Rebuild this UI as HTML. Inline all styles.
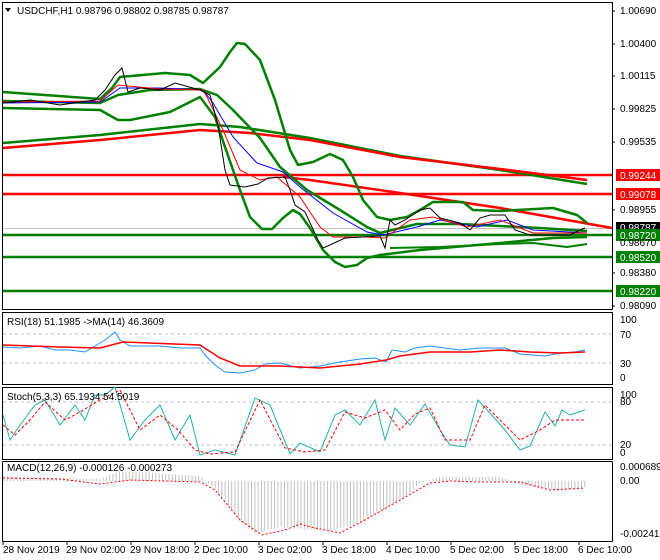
<!DOCTYPE html>
<html><head><meta charset="utf-8"><style>
body{margin:0;background:#fff;}
svg{display:block;font-family:"Liberation Sans",sans-serif;font-size:10px;}
</style></head><body>
<svg id="s" width="660" height="560" xmlns="http://www.w3.org/2000/svg">
<rect x="0" y="0" width="660" height="560" fill="#fff"/>
<g fill="none" stroke="#000" stroke-width="1">
<rect x="2.5" y="2.5" width="610" height="307"/>
<rect x="2.5" y="312.5" width="610" height="72"/>
<rect x="2.5" y="387.5" width="610" height="72"/>
<line x1="2.5" y1="461.5" x2="612.5" y2="461.5"/>
<line x1="2.5" y1="461.5" x2="2.5" y2="541.5"/>
<line x1="612.5" y1="461.5" x2="612.5" y2="541.5"/>
<line x1="2.5" y1="541.5" x2="612.5" y2="541.5"/>
</g>
<line x1="3" y1="228.5" x2="612" y2="228.5" stroke="#c0c0c0"/>
<g stroke-width="2.5">
<line x1="3" y1="175" x2="612" y2="175" stroke="#f00"/>
<line x1="3" y1="194" x2="612" y2="194" stroke="#f00"/>
<line x1="3" y1="235" x2="612" y2="235" stroke="#008000"/>
<line x1="3" y1="257" x2="612" y2="257" stroke="#008000"/>
<line x1="3" y1="291" x2="612" y2="291" stroke="#008000"/>
</g>
<g fill="none" stroke-width="2.5" stroke-linejoin="round">
<polyline stroke="#008000" points="3,143 100,135 200,124 240,127 310,138 400,156 500,170 587,184"/>
<polyline stroke="#f00" points="3,148 100,140 200,130 250,133 310,140 400,157 500,169 587,180"/>
<polyline stroke="#f00" points="283,177 310,180 400,193 500,208 612,228"/>
<polyline stroke="#008000" points="3,92 100,99 112,88 120,77 165,73 190,75 203,83 220,67 230,52 237,43 245,44 260,60 275,100 290,150 298,165 313,162 330,154 343,160 353,177 363,200 377,217 390,220 407,217 420,210 433,202 463,202 473,210 500,211 553,208 577,215 587,223"/>
<polyline stroke="#008000" points="3,108 100,110 118,120 130,120 170,112 200,97 215,117 225,147 240,190 250,217 262,229 272,229 283,218 293,210 300,214 310,228 323,250 335,262 345,267 357,265 367,258 380,255 420,250 500,243 553,238 587,237"/>
<polyline stroke="#008000" stroke-width="2" points="390,248 440,247 500,244 533,243 567,247 587,244"/>
<polyline stroke="#008000" points="3,101 100,103 118,95 150,90 200,89 217,95 233,110 260,138 280,167 307,190 340,210 367,227 380,233 417,224 460,224 500,226 540,228 587,231"/>
</g>
<g fill="none" stroke-width="1">
<polyline stroke="#00f" points="3,103 100,102 120,88 160,88 203,90 213,103 233,137 257,163 283,172 300,187 333,213 367,232 383,235 417,227 440,220 477,227 507,220 533,230 587,233"/>
<polyline stroke="#f00" points="3,102 100,101 118,85 160,89 203,90 207,97 223,130 240,170 260,180 277,177 300,197 320,227 333,237 367,237 385,238 410,220 433,217 467,227 500,220 533,233 587,233"/>
<polyline stroke="#000" points="3,103 30,100 60,105 95,100 105,90 115,75 122,68 128,92 140,88 160,90 175,83 200,90 210,95 218,125 225,170 230,185 245,187 258,184 268,178 285,177 290,190 295,205 305,212 318,240 323,248 330,245 345,238 380,236 385,248 390,220 395,225 405,220 420,210 430,208 440,218 460,223 470,230 480,218 490,215 505,215 515,230 530,235 570,235 580,230 585,228"/>
</g>
<g stroke="#c0c0c0" stroke-dasharray="3,3"><line x1="3" y1="334" x2="612" y2="334"/><line x1="3" y1="363" x2="612" y2="363"/>
<line x1="3" y1="402" x2="612" y2="402"/><line x1="3" y1="445" x2="612" y2="445"/></g>
<polyline fill="none" stroke="#1e90ff" points="3,347 20,348 40,346 55,350 70,350 85,352 95,346 105,340 115,332 120,340 130,346 160,346 180,348 200,348 205,355 215,365 225,372 240,373 255,370 265,364 280,363 300,368 320,366 340,362 360,359 375,358 386,362 392,350 405,352 415,348 430,346 460,350 480,348 505,348 520,354 545,356 560,353 575,352 585,350"/>
<polyline fill="none" stroke="#f00" stroke-width="1.5" points="3,345 60,347 100,348 123,342 200,345 220,358 240,366 280,366 320,368 360,364 386,360 400,356 430,352 470,352 500,350 530,352 560,353 585,352"/>
<polyline fill="none" stroke="#20b2aa" points="3,415 10,440 20,425 35,405 45,400 60,425 75,405 85,420 95,395 105,395 115,387 130,440 145,420 160,405 175,440 190,415 200,455 215,450 235,455 255,398 270,405 290,454 300,443 320,452 335,415 345,410 360,425 375,400 385,440 395,408 410,425 425,404 440,430 450,445 465,447 478,400 490,413 505,430 520,450 530,446 545,412 555,426 562,410 570,415 585,410"/>
<polyline fill="none" stroke="#f00" stroke-dasharray="3,2" points="3,425 15,435 30,420 45,402 65,420 80,412 100,400 120,390 140,430 160,415 178,430 195,450 210,454 235,452 260,400 285,448 305,452 325,450 345,412 365,418 385,410 400,430 415,414 430,408 445,440 470,440 485,405 500,420 520,440 540,430 555,420 585,420"/>
<g id="h" stroke="#c0c0c0" stroke-width="1"></g>
<polyline fill="none" stroke="#f00" stroke-dasharray="2,2" points="3,478 60,479 100,484 130,480 200,482 215,490 240,520 262,535 285,530 300,524 315,528 340,533 365,520 400,500 430,483 450,481 480,482 520,482 550,490 585,488"/>
<polygon points="5,8 11,8 8,12" fill="#000"/>
<text x="17" y="14">USDCHF,H1  0.98796 0.98802 0.98785 0.98787</text>
<text x="7" y="325">RSI(18) 51.1985  -&gt;MA(14) 46.3609</text>
<text x="7" y="400">Stoch(5,3,3) 65.1934 54.5019</text>
<text x="7" y="471">MACD(12,26,9) -0.000126 -0.000273</text>
<g font-size="10">
<text x="620" y="14">1.00690</text><text x="620" y="47">1.00400</text><text x="620" y="79">1.00115</text><text x="620" y="112">0.99825</text><text x="620" y="145">0.99535</text><text x="620" y="213">0.98955</text><text x="620" y="276">0.98380</text><text x="620" y="309">0.98090</text>
<text x="620" y="323">100</text><text x="620" y="338">70</text><text x="620" y="367">30</text><text x="620" y="381">0</text>
<text x="620" y="398">100</text><text x="620" y="405">80</text><text x="620" y="448">20</text><text x="620" y="456">0</text>
<text x="620" y="470">0.000689</text><text x="620" y="484">0.00</text><text x="620" y="537">-0.002413</text>
</g>
<rect x="616" y="169" width="44" height="12" fill="#f00"/><text x="620" y="179" fill="#fff">0.99244</text>
<rect x="616" y="188" width="44" height="12" fill="#f00"/><text x="620" y="198" fill="#fff">0.99078</text>
<rect x="616" y="222" width="44" height="11" fill="#000"/><text x="620" y="231" fill="#fff">0.98787</text>
<rect x="616" y="229" width="44" height="12" fill="#008000"/><text x="620" y="239" fill="#fff">0.98720</text>
<text x="620" y="246">0.98670</text>
<rect x="616" y="251" width="44" height="12" fill="#008000"/><text x="620" y="261" fill="#fff">0.98520</text>
<rect x="616" y="285" width="44" height="12" fill="#008000"/><text x="620" y="295" fill="#fff">0.98220</text>
<g stroke="#000"><line x1="612" y1="11" x2="615" y2="11"/><line x1="612" y1="44" x2="615" y2="44"/><line x1="612" y1="76" x2="615" y2="76"/><line x1="612" y1="109" x2="615" y2="109"/><line x1="612" y1="142" x2="615" y2="142"/><line x1="612" y1="210" x2="615" y2="210"/><line x1="612" y1="273" x2="615" y2="273"/><line x1="612" y1="306" x2="615" y2="306"/>
<line x1="3" y1="541" x2="3" y2="545"/><line x1="67" y1="541" x2="67" y2="545"/><line x1="131" y1="541" x2="131" y2="545"/><line x1="195" y1="541" x2="195" y2="545"/><line x1="259" y1="541" x2="259" y2="545"/><line x1="323" y1="541" x2="323" y2="545"/><line x1="387" y1="541" x2="387" y2="545"/><line x1="451" y1="541" x2="451" y2="545"/><line x1="515" y1="541" x2="515" y2="545"/><line x1="579" y1="541" x2="579" y2="545"/></g>
<text x="3" y="553">28 Nov 2019</text><text x="66" y="553">29 Nov 02:00</text><text x="130" y="553">29 Nov 18:00</text><text x="194" y="553">2 Dec 10:00</text><text x="258" y="553">3 Dec 02:00</text><text x="322" y="553">3 Dec 18:00</text><text x="386" y="553">4 Dec 10:00</text><text x="450" y="553">5 Dec 02:00</text><text x="514" y="553">5 Dec 18:00</text><text x="578" y="553">6 Dec 10:00</text>
</svg>
<script>
var g=document.getElementById('h'),ns='http://www.w3.org/2000/svg';
var pts=[[3,-5],[100,-2],[120,-10],[200,-5],[215,8],[240,40],[255,52],[280,46],[330,50],[360,42],[400,20],[420,2],[440,-4],[500,-4],[520,4],[560,10],[585,6]];
function v(x){for(var i=1;i<pts.length;i++){if(x<=pts[i][0]){var a=pts[i-1],b=pts[i];return a[1]+(b[1]-a[1])*(x-a[0])/(b[0]-a[0]);}}return 0;}
for(var x=4;x<=586;x+=3.3){var h=v(x),l=document.createElementNS(ns,'line');l.setAttribute('x1',x.toFixed(1));l.setAttribute('x2',x.toFixed(1));l.setAttribute('y1',481);l.setAttribute('y2',(481+h).toFixed(1));g.appendChild(l);}
</script>
</body></html>
